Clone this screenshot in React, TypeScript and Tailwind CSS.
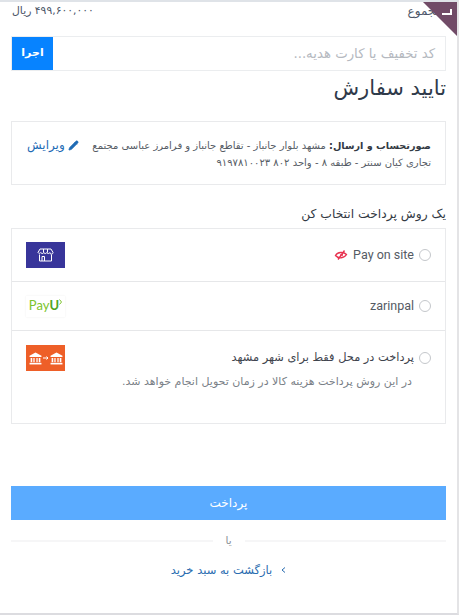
import React from "react";
import { Pencil } from "lucide-react";

const font = { fontFamily: '"DejaVu Sans", sans-serif' };

function Radio() {
  return <span className="w-3 h-3 rounded-full border border-[#c4c7cb] bg-white shrink-0" />;
}

function StoreIcon() {
  return (
    <svg width="17" height="14" viewBox="0 0 17 14" fill="none" stroke="white" strokeWidth="1">
      <path d="M3 1h11l2 3.500a1.600 1.600 0 0 1-3.200 0 1.600 1.600 0 0 1-3 0 1.600 1.600 0 0 1-3 0 1.600 1.600 0 0 1-3 0 1.600 1.600 0 0 1-2.800 0z" />
      <path d="M2.500 6.500V13h12V6.500M5 13V8.500h2.500V13" />
      <path d="M6.500 1v3.500M10.500 1v3.500" />
    </svg>
  );
}

function BankGlyph() {
  return (
    <svg width="13" height="13" viewBox="0 0 12 12" fill="white">
      <path d="M6 0.500 11.500 3.500v1H0.500v-1z" />
      <path d="M1.500 5.500h1.500v4H1.500zM4 5.500h1.200v4H4zM6.800 5.500H8v4H6.800zM9 5.500h1.500v4H9z" />
      <path d="M0.500 10h11v1.500h-11z" />
    </svg>
  );
}

export default function App() {
  return (
    <div dir="rtl" style={font} className="relative w-[459px] h-[615px] overflow-hidden bg-white border-t-2 border-t-[#dfe3e8] border-r-2 border-r-[#e4e4e6] border-b-2 border-b-[#dcdce0] text-[#3a4556]">
      <div className="flex flex-col px-[11px]">
        <div className="flex items-center justify-between h-[18px] text-[12px] text-[#4b5568] pr-[4px] pl-[1px]">
          <span>مجموع</span>
          <span className="text-[10.8px]">۴۹۹,۶۰۰,۰۰۰ ریال</span>
        </div>

        <div className="flex h-[35px] mt-[16px] border border-[#ebedef]">
          <div className="flex-1 flex items-center pr-[10px] text-[13.3px] text-[#b5b9bf]">کد تخفیف یا کارت هدیه...</div>
          <div className="w-[41px] bg-[#0783ff] text-white text-[11px] font-bold flex items-center justify-center">اجرا</div>
        </div>

        <h1 className="text-[21px] leading-[24px] mt-[5px] text-[#2f3a4a] font-normal">تایید سفارش</h1>

        <div className="mt-[21px] h-[64px] border border-[#e9eaec] pr-[14px] pl-[15px] pt-[15px] flex items-start justify-between">
          <div className="text-[10px] leading-[17px] text-[#565c65] whitespace-nowrap">
            <div><b className="text-[9.7px] text-[#333a44]">صورتحساب و ارسال:</b> مشهد بلوار جانباز - تقاطع جانباز و فرامرز عباسی مجتمع</div>
            <div>تجاری کیان سنتر - طبقه ۸ - واحد ۸۰۲ ۹۱۹۷۸۱۰۰۲۳</div>
          </div>
          <a className="flex items-center gap-[3px] text-[12px] leading-[17px] text-[#1f6bb5] shrink-0">
            <Pencil size={11} fill="#1f6bb5" strokeWidth={1.5} />
            ویرایش
          </a>
        </div>

        <h2 className="text-[12.3px] leading-[16px] mt-[21px] text-[#333a44] font-normal">یک روش پرداخت انتخاب کن</h2>

        <div className="mt-[6px] border border-[#e9eaec] flex flex-col">
          <div className="h-[53px] flex items-center justify-between pr-[14px] pl-[14px] border-b border-[#e6e7e9]">
            <div className="flex items-center gap-[5px] text-[12.5px] text-[#555b64]" style={{ fontFamily: 'Roboto, sans-serif' }}>
              <Radio />
              <span dir="ltr">Pay on site</span>
              <svg width="14" height="10" viewBox="0 0 13 10" fill="none" stroke="#e8324f" strokeWidth="1.400">
                <path d="M1 5.500C3 2 9 1.500 12 4.500 9.500 8.500 4 9 1 5.500z" />
                <path d="M3.500 9.500 10 0.500M5.500 5h3" />
              </svg>
            </div>
            <div className="w-[39px] h-[26px] bg-[#38359a] flex items-center justify-center"><StoreIcon /></div>
          </div>

          <div className="h-[49px] flex items-center justify-between pr-[14px] pl-[14px] border-b border-[#e6e7e9]">
            <div className="flex items-center gap-[5px] text-[12.5px] text-[#555b64]" style={{ fontFamily: 'Roboto, sans-serif' }}>
              <Radio />
              <span>zarinpal</span>
            </div>
            <div dir="ltr" className="w-[39px] h-[21px] bg-white shadow-[0_0_2px_#eee] flex items-center justify-center text-[13px] font-normal text-[#7cc42c]" style={{ fontFamily: 'Lato, sans-serif' }}>
              Pay<span className="font-bold text-[#4fa51f]">U</span>
              <svg width="3" height="6" viewBox="0 0 3 6" fill="none" stroke="#7cc42c" strokeWidth="1" className="-mt-[8px]"><path d="M0.500 0.500 2.500 3 0.500 5.500" /></svg>
            </div>
          </div>

          <div className="h-[92px] flex flex-col pr-[14px] pl-[14px] pt-[14px]">
            <div className="flex items-center justify-between h-[26px]">
              <div className="flex items-center gap-[5px] text-[11.4px] text-[#3f454e]">
                <Radio />
                <span>پرداخت در محل فقط برای شهر مشهد</span>
              </div>
              <div dir="ltr" className="w-[39px] h-[26px] bg-[#ee5f28] flex items-center justify-center gap-[1px]">
                <BankGlyph />
                <svg width="6" height="6" viewBox="0 0 6 6" fill="none" stroke="white" strokeWidth="1"><path d="M0 3h5M3.500 1.500 5 3 3.500 4.500" /></svg>
                <BankGlyph />
              </div>
            </div>
            <p className="text-[11px] leading-[16px] mt-[3px] pr-[19px] text-[#7a7f87] whitespace-nowrap">در این روش پرداخت هزینه کالا در زمان تحویل انجام خواهد شد.</p>
          </div>
        </div>

        <button className="mt-[62px] h-[34px] w-full bg-[#5aabff] text-white text-[12px] font-normal flex items-center justify-center">پرداخت</button>

        <div className="relative mt-[20px] h-[2px] bg-[#f6f6f7]">
          <span className="absolute left-1/2 -translate-x-1/2 -top-[8px] bg-white px-[13px] text-[10.5px] leading-[16px] text-[#8a8f96]">یا</span>
        </div>

        <a className="mt-[20px] flex items-center justify-center gap-[9px] text-[11.5px] leading-[16px] text-[#2a6cb0]">
          <svg width="5" height="6" viewBox="0 0 5 6" fill="none" stroke="#2a6cb0" strokeWidth="1"><path d="M4 0.500 1 3l3 2.500" /></svg>
          بازگشت به سبد خرید
        </a>
      </div>

      <div className="absolute top-0 right-0 w-0 h-0 border-t-[34px] border-t-[#714b67] border-l-[34px] border-l-transparent" />
      <span className="absolute top-[7px] right-[5px] w-[10px] h-[6px] border-b-2 border-r-2 border-white" />
    </div>
  );
}
